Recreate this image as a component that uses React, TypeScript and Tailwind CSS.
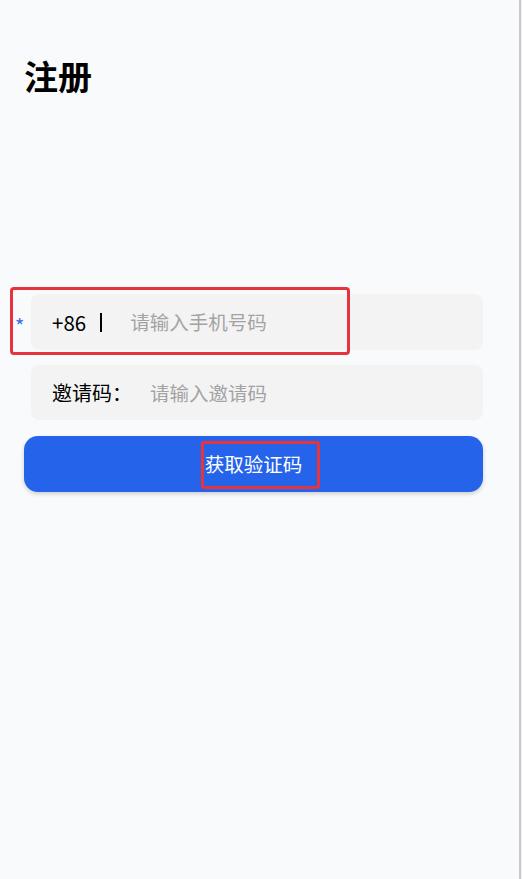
import React from "react";

export default function App() {
  return (
    <div className="relative min-h-[879px] w-[522px] bg-[#f9fafb] font-['Noto_Sans_CJK_SC','Noto_Sans',sans-serif] text-black overflow-hidden">
      <div className="flex min-h-[879px]">
        <div className="flex-1 flex flex-col">
          <div className="pt-[55px] pl-[24px]">
            <h1 className="text-[34px] leading-[42px] font-bold">注册</h1>
          </div>

          <div className="mt-[197px] flex flex-col">
            <div className="flex items-start pl-[15px]">
              <span className="w-[16px] mt-[20px] text-[20px] leading-[24px] text-[#3b6fe0]">*</span>
              <div className="w-[452px] h-[56px] rounded-[8px] bg-[#f3f3f4] flex items-center pl-[21px]">
                <span className="text-[20.5px] leading-[28px]">+86</span>
                <span className="ml-[14px] w-[2px] h-[19px] bg-black"></span>
                <span className="ml-[28px] text-[19.5px] leading-[28px] text-[#a3a3a3]">请输入手机号码</span>
              </div>
            </div>

            <div className="mt-[15px] ml-[31px] w-[452px] h-[55px] rounded-[8px] bg-[#f3f3f4] flex items-center pl-[21px]">
              <span className="w-[78px] text-[20px] leading-[28px] whitespace-nowrap">邀请码：</span>
              <span className="ml-[20px] text-[19.5px] leading-[28px] text-[#a3a3a3]">请输入邀请码</span>
            </div>

            <div className="mt-[16px] ml-[24px] w-[459px] h-[56px] rounded-[14px] bg-[#2563eb] shadow-[0_2px_4px_rgba(0,0,0,0.18)] flex items-center justify-center">
              <span className="text-[19.5px] leading-[28px] text-white">获取验证码</span>
            </div>
          </div>
        </div>
        <div className="w-[3px] flex">
          <div className="w-[2px] bg-[#c9c9cc]"></div>
          <div className="w-[1px] bg-[#f0f0f2]"></div>
        </div>
      </div>

      <div className="absolute left-[10px] top-[287px] w-[340px] h-[68px] border-[3px] border-[#e5343d] rounded-[4px]"></div>
      <div className="absolute left-[201px] top-[441px] w-[119px] h-[48px] border-[3px] border-[#e5343d] rounded-[3px]"></div>
    </div>
  );
}
